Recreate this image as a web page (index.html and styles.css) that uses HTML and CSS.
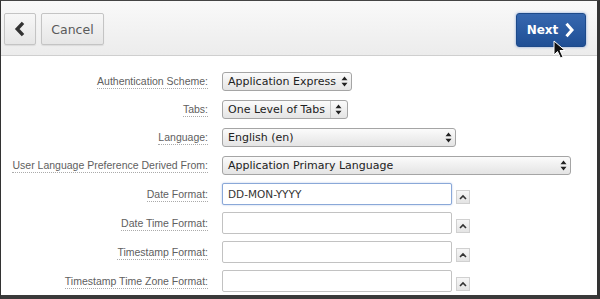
FILE: index.html
```html
<!DOCTYPE html>
<html>
<head>
<meta charset="utf-8">
<link rel="stylesheet" href="styles.css">
</head>
<body>
<div class="frame">
  <div class="header">
    <div class="btn btn-back">
      <svg width="12" height="16" viewBox="0 0 12 16"><path d="M9 1.8 L3.2 8 L9 14.2" fill="none" stroke="#333" stroke-width="3.4" stroke-linejoin="miter"/></svg>
    </div>
    <div class="btn btn-cancel">Cancel</div>
    <div class="spacer"></div>
    <div class="btn btn-next">Next
      <svg width="11" height="16" viewBox="0 0 11 16"><path d="M2.5 1.8 L8 8 L2.5 14.2" fill="none" stroke="#fff" stroke-width="3"/></svg>
    </div>
    <svg class="cursor" width="16" height="20" viewBox="0 0 16 20"><path d="M1 1 L1 15 L4.5 11.5 L7.5 18 L10 17 L7 10.5 L12 10.5 Z" fill="#111" stroke="#fff" stroke-width="1"/></svg>
  </div>
  <div class="form">
    <div class="row">
      <div class="label"><span>Authentication Scheme:</span></div>
      <div class="select w130"><span class="val">Application Express</span><span class="arr"><svg width="7" height="11" viewBox="0 0 7 11"><path d="M3.5 0.5 L6.5 4.2 L0.5 4.2 Z M3.5 10.5 L6.5 6.8 L0.5 6.8 Z" fill="#222"/></svg></span></div>
    </div>
    <div class="row">
      <div class="label"><span>Tabs:</span></div>
      <div class="select w126"><span class="val">One Level of Tabs</span><span class="arr div"><svg width="7" height="11" viewBox="0 0 7 11"><path d="M3.5 0.5 L6.5 4.2 L0.5 4.2 Z M3.5 10.5 L6.5 6.8 L0.5 6.8 Z" fill="#222"/></svg></span></div>
    </div>
    <div class="row">
      <div class="label"><span>Language:</span></div>
      <div class="select w234"><span class="val">English (en)</span><span class="arr"><svg width="7" height="11" viewBox="0 0 7 11"><path d="M3.5 0.5 L6.5 4.2 L0.5 4.2 Z M3.5 10.5 L6.5 6.8 L0.5 6.8 Z" fill="#222"/></svg></span></div>
    </div>
    <div class="row">
      <div class="label"><span>User Language Preference Derived From:</span></div>
      <div class="select w349"><span class="val">Application Primary Language</span><span class="arr"><svg width="7" height="11" viewBox="0 0 7 11"><path d="M3.5 0.5 L6.5 4.2 L0.5 4.2 Z M3.5 10.5 L6.5 6.8 L0.5 6.8 Z" fill="#222"/></svg></span></div>
    </div>
    <div class="row irow">
      <div class="label"><span>Date Format:</span></div>
      <div class="input focus">DD-MON-YYYY</div>
      <div class="up"><svg width="8" height="6" viewBox="0 0 8 6"><path d="M1 5 L4 2 L7 5" fill="none" stroke="#333" stroke-width="1.6"/></svg></div>
    </div>
    <div class="row irow">
      <div class="label"><span>Date Time Format:</span></div>
      <div class="input"></div>
      <div class="up"><svg width="8" height="6" viewBox="0 0 8 6"><path d="M1 5 L4 2 L7 5" fill="none" stroke="#333" stroke-width="1.6"/></svg></div>
    </div>
    <div class="row irow">
      <div class="label"><span>Timestamp Format:</span></div>
      <div class="input"></div>
      <div class="up"><svg width="8" height="6" viewBox="0 0 8 6"><path d="M1 5 L4 2 L7 5" fill="none" stroke="#333" stroke-width="1.6"/></svg></div>
    </div>
    <div class="row irow">
      <div class="label"><span>Timestamp Time Zone Format:</span></div>
      <div class="input"></div>
      <div class="up"><svg width="8" height="6" viewBox="0 0 8 6"><path d="M1 5 L4 2 L7 5" fill="none" stroke="#333" stroke-width="1.6"/></svg></div>
    </div>
  </div>
</div>
</body>
</html>
```
FILE: styles.css
```css
html, body { margin: 0; padding: 0; }
body { width: 600px; height: 299px; overflow: hidden; background: #fff; font-family: "DejaVu Sans", sans-serif; }
.frame {
  box-sizing: border-box; width: 600px; height: 299px;
  border-left: 1px solid #333; border-top: 1px solid #444;
  border-right: 3px solid #333; border-bottom: 4px solid #3a3a3a;
  background: #fff; position: relative;
}
.header {
  height: 55px; border-bottom: 1px solid #cfcfcf;
  background: linear-gradient(#f9f9f9, #ececec);
  display: flex; align-items: flex-start; padding: 12px 11px 0 3px; box-sizing: border-box;
  position: relative;
}
.btn {
  box-sizing: border-box; height: 32px; border: 1px solid #c4c4c4; border-radius: 2px;
  background: linear-gradient(#f7f7f7, #e6e6e6);
  display: flex; align-items: center; justify-content: center;
  box-shadow: 0 1px 1px rgba(0,0,0,0.08);
}
.btn-back { width: 32px; }
.btn-cancel { width: 63px; margin-left: 5px; font-size: 12.5px; color: #5a5a5a; }
.spacer { flex: 1; }
.btn-next {
  width: 70px; height: 34px; border: 1px solid #1d4a8a; border-radius: 3px;
  background: linear-gradient(#3768b0, #1f4f95);
  color: #fff; font-weight: bold; font-size: 12px; gap: 6px;
  box-shadow: 0 0 3px rgba(60,110,200,0.6);
}
.cursor { position: absolute; left: 552px; top: 39px; }
.form { padding-top: 11px; }
.row { display: flex; align-items: center; height: 28px; }
.irow { height: 29px; }
.label {
  width: 207px; text-align: right; font-family: "Liberation Sans", Arial, sans-serif;
  font-size: 10.5px; color: #606060; margin-right: 14px;
}
.label span { border-bottom: 1px dotted #aaa; padding-bottom: 1px; }
.select {
  box-sizing: border-box; height: 19px; border: 1px solid #a5a5a5; border-radius: 3px;
  background: linear-gradient(#fbfbfb, #e4e4e4);
  display: flex; align-items: center; font-size: 11px; color: #222;
  padding-left: 5px; position: relative;
}
.select .val { flex: 1; white-space: nowrap; }
.select .arr { width: 12px; height: 17px; display: flex; align-items: center; justify-content: center; margin-right: 1px; }
.select .arr.div { border-left: 1px solid #c8c8c8; width: 15px; }
.w130 { width: 130px; }
.w126 { width: 126px; }
.w234 { width: 234px; }
.w349 { width: 349px; }
.input {
  box-sizing: border-box; width: 230px; height: 22px; border: 1px solid #c2c2c2; border-radius: 2px;
  font-size: 10.5px; color: #333; padding-left: 5px; line-height: 20px; background: #fff;
}
.input.focus { border-color: #8aa8d8; box-shadow: 0 0 2px rgba(100,140,210,0.5); }
.up {
  box-sizing: border-box; width: 14px; height: 14px; margin-left: 4px; margin-top: 6px;
  border: 1px solid #d0d0d0; background: linear-gradient(#f6f6f6, #e4e4e4);
  display: flex; align-items: center; justify-content: center;
}
```
